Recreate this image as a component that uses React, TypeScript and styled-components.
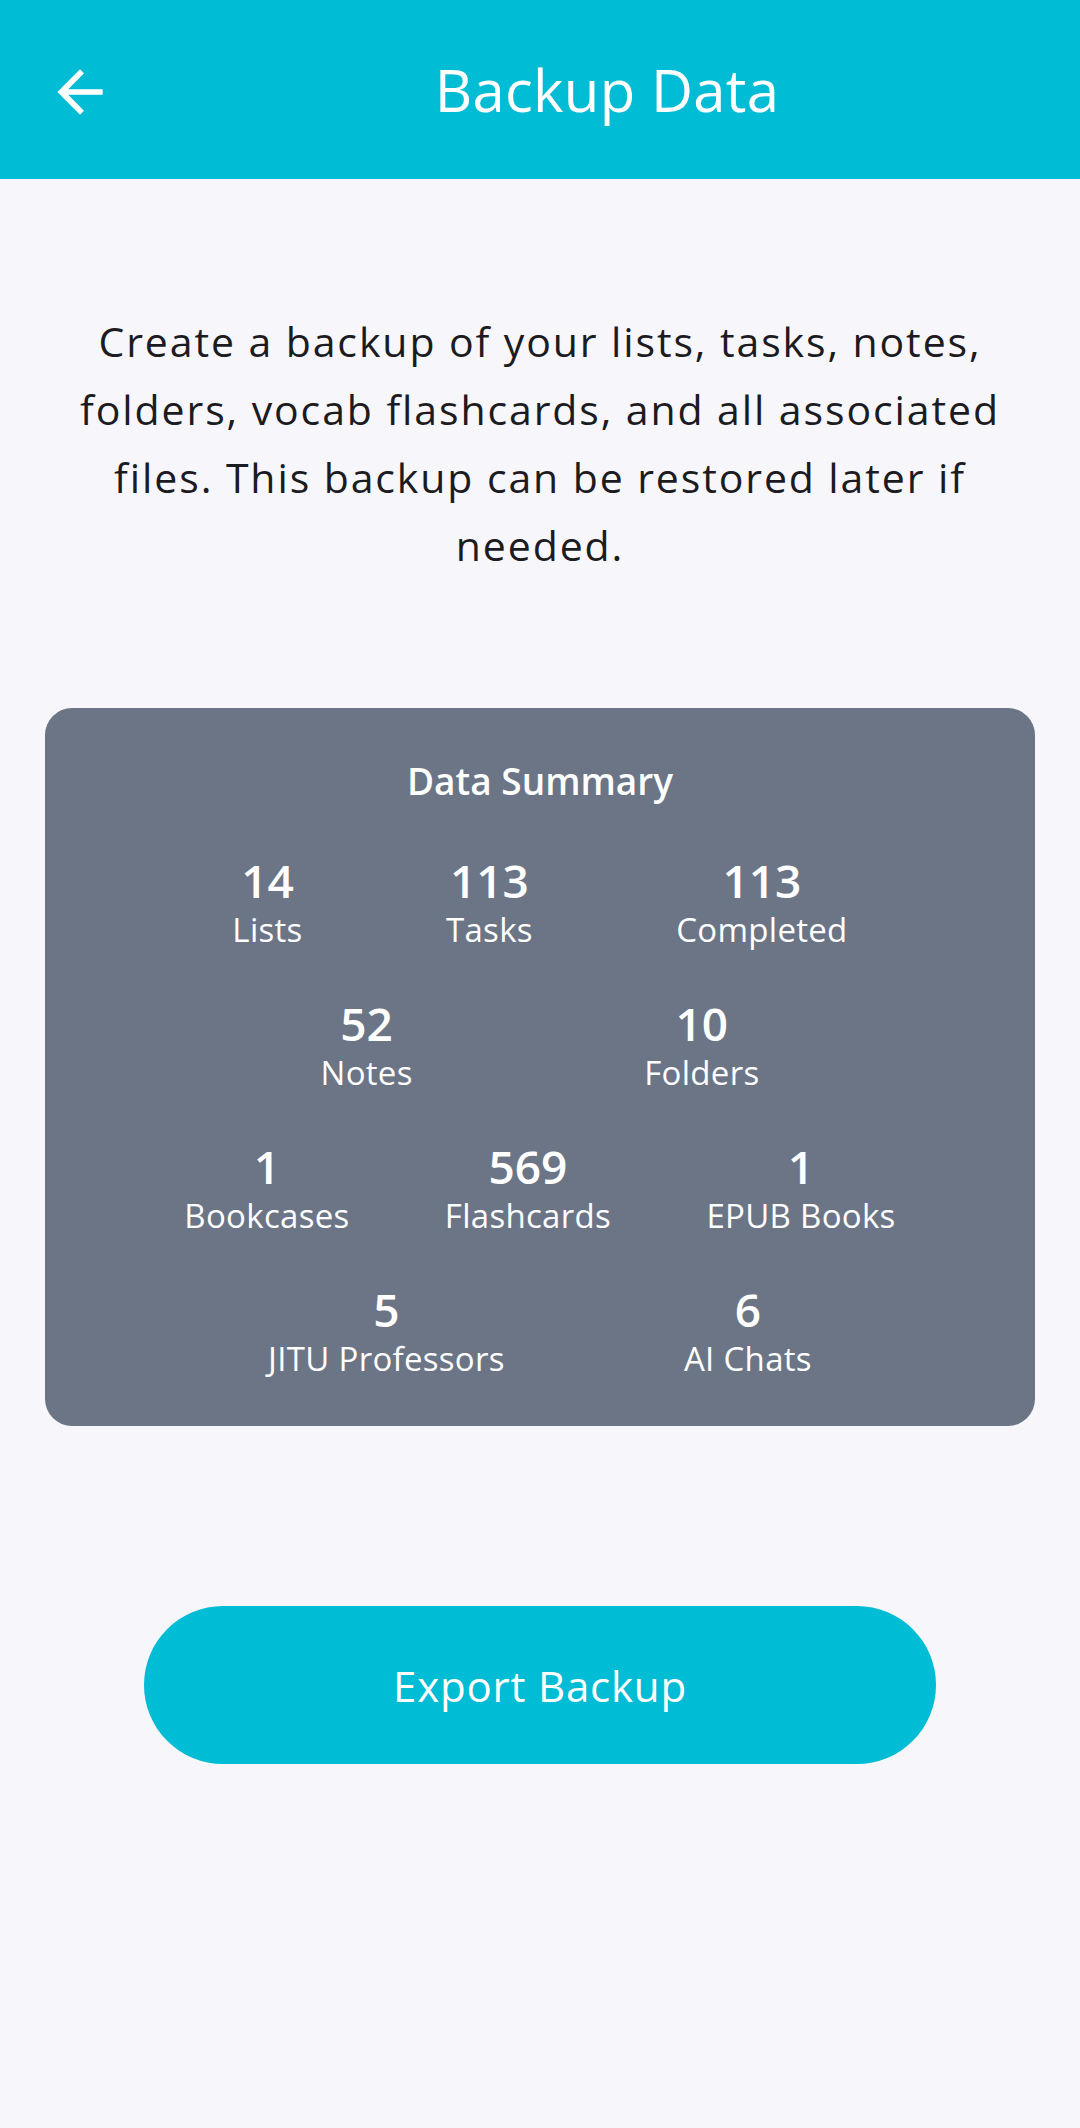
import React from 'react';
import styled, { createGlobalStyle } from 'styled-components';

const GlobalStyle = createGlobalStyle`
  html, body {
    margin: 0;
    padding: 0;
    background-color: #f7f7fb;
  }
  body {
    font-family: 'Open Sans', 'Noto Sans', sans-serif;
  }
`;

const Page = styled.main`
  width: 1080px;
  min-height: 2128px;
  background-color: #f7f7fb;
  display: flex;
  flex-direction: column;
`;

const Header = styled.header`
  height: 179px;
  background-color: #00bcd4;
  display: flex;
  align-items: center;
`;

const BackButton = styled.button`
  width: 134px;
  height: 100%;
  padding: 4px 0 0 46px;
  border: none;
  background: none;
  display: flex;
  align-items: center;
  color: #ffffff;
`;

const Title = styled.h1`
  flex: 1;
  margin: 0;
  text-align: center;
  font-size: 58px;
  font-weight: 400;
  color: #ffffff;
  letter-spacing: 0.3px;
`;

const Body = styled.section`
  display: flex;
  flex-direction: column;
  align-items: center;
  padding: 128px 45px 0;
`;

const Description = styled.p`
  margin: 0;
  width: 960px;
  text-align: center;
  font-size: 41px;
  line-height: 68px;
  letter-spacing: 1.9px;
  color: #1c1b1f;
`;

const Card = styled.div`
  margin-top: 129px;
  width: 990px;
  box-sizing: border-box;
  padding: 45px 44px 45px;
  background-color: #6b7586;
  border-radius: 27px;
  display: flex;
  flex-direction: column;
  gap: 43px;
`;

const CardTitle = styled.h2`
  margin: 0;
  text-align: center;
  font-size: 37px;
  line-height: 56px;
  font-weight: 600;
  color: #ffffff;
`;

const StatRow = styled.div`
  display: flex;
  justify-content: space-evenly;
`;

const Stat = styled.div`
  display: flex;
  flex-direction: column;
  align-items: center;
  color: #ffffff;
`;

const StatValue = styled.span`
  font-size: 46px;
  line-height: 56px;
  font-weight: 600;
`;

const StatLabel = styled.span`
  font-size: 33px;
  line-height: 44px;
  letter-spacing: 0.3px;
`;

const ExportButton = styled.button`
  margin-top: 180px;
  width: 792px;
  height: 158px;
  border: none;
  border-radius: 79px;
  background-color: #00bcd4;
  color: #ffffff;
  font-family: 'Open Sans', 'Noto Sans', sans-serif;
  font-size: 42px;
  letter-spacing: 0.8px;
`;

const rows = [
  [
    { value: 14, label: 'Lists' },
    { value: 113, label: 'Tasks' },
    { value: 113, label: 'Completed' },
  ],
  [
    { value: 52, label: 'Notes' },
    { value: 10, label: 'Folders' },
  ],
  [
    { value: 1, label: 'Bookcases' },
    { value: 569, label: 'Flashcards' },
    { value: 1, label: 'EPUB Books' },
  ],
  [
    { value: 5, label: 'JITU Professors' },
    { value: 6, label: 'AI Chats' },
  ],
];

function BackArrow() {
  return (
    <svg width='68' height='68' viewBox='0 0 24 24' fill='currentColor'>
      <path d='M20 11H7.83l5.59-5.59L12 4l-8 8 8 8 1.41-1.41L7.83 13H20v-2z' />
    </svg>
  );
}

function App() {
  return (
    <Page>
      <GlobalStyle />
      <Header>
        <BackButton aria-label='Back'>
          <BackArrow />
        </BackButton>
        <Title>Backup Data</Title>
      </Header>
      <Body>
        <Description>
          Create a backup of your lists, tasks, notes, folders, vocab flashcards, and all associated
          files. This backup can be restored later if needed.
        </Description>
        <Card>
          <CardTitle>Data Summary</CardTitle>
          {rows.map((row, i) => (
            <StatRow key={i}>
              {row.map((stat) => (
                <Stat key={stat.label}>
                  <StatValue>{stat.value}</StatValue>
                  <StatLabel>{stat.label}</StatLabel>
                </Stat>
              ))}
            </StatRow>
          ))}
        </Card>
        <ExportButton>Export Backup</ExportButton>
      </Body>
    </Page>
  );
}

export default App;
